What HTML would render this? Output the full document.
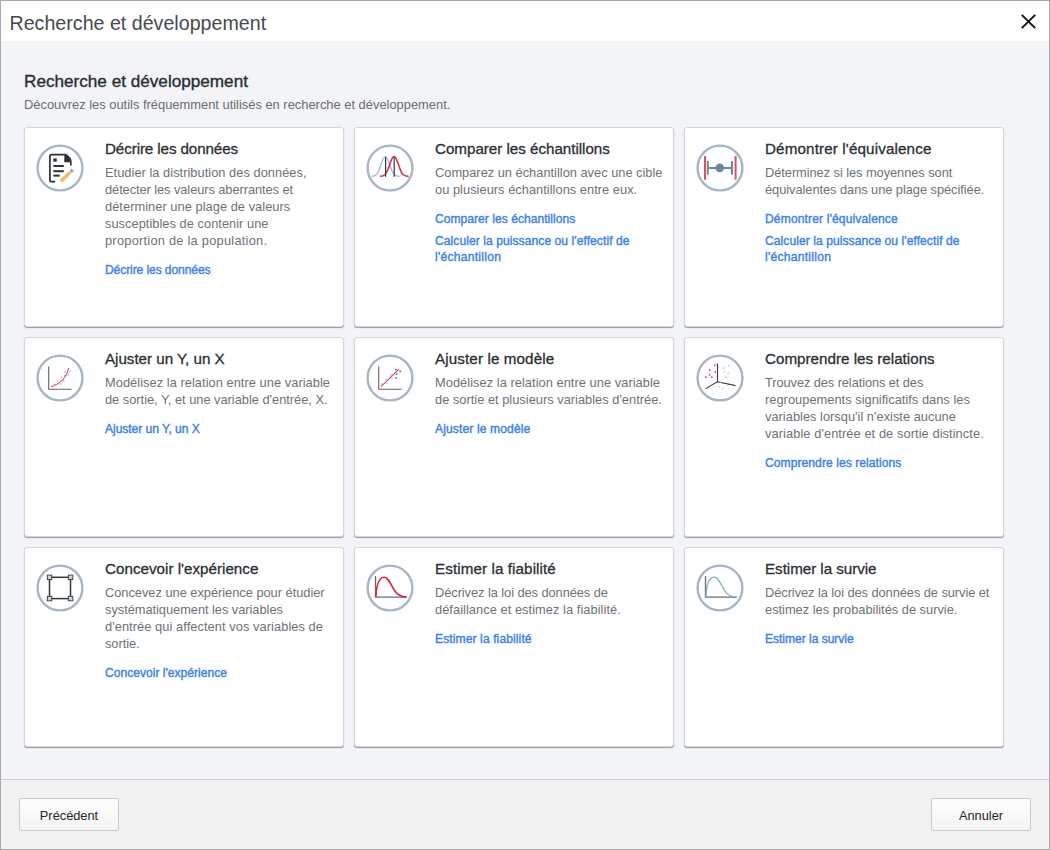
<!DOCTYPE html>
<html><head><meta charset="utf-8"><style>
*{margin:0;padding:0;box-sizing:border-box}
html,body{width:1050px;height:850px;overflow:hidden;background:#fff}
body{font-family:"Liberation Sans",sans-serif;position:relative}
#win{position:absolute;left:0;top:0;width:1050px;height:850px;border:1px solid #a9a9a9;background:#f3f4f7}
#tb{position:absolute;left:1px;top:1px;width:1048px;height:40px;background:#fff}
#ttl{position:absolute;left:9.5px;top:11px;font-size:19.65px;line-height:24px;color:#464b4f;white-space:nowrap}
#close{position:absolute;left:1020px;top:13px}
#head{position:absolute;left:24px;top:71px;font-size:17.15px;font-weight:400;-webkit-text-stroke:0.35px #232a31;line-height:20px;color:#2b2f33;white-space:nowrap}
#sub{position:absolute;left:24px;top:97px;font-size:12.9px;line-height:16px;color:#686c70;white-space:nowrap}
.card{position:absolute;width:320px;height:200px;background:#fff;border:1px solid #d4d8dc;border-radius:3px;box-shadow:0 1px 1px rgba(20,30,40,.42)}
.ic{position:absolute;left:11px;top:16px}
.ct{position:absolute;left:80px;top:11px;font-size:15.2px;line-height:20px;color:#2b2f33;-webkit-text-stroke:0.3px #2b2f33;white-space:nowrap}
.cd{position:absolute;left:80px;top:36px;font-size:12.83px;line-height:17px;color:#6e7276;white-space:nowrap}
.lk{position:absolute;left:80px;font-size:12.1px;font-weight:400;-webkit-text-stroke:0.38px #3a80ee;line-height:16px;color:#3a80ee;white-space:nowrap}
#sep{position:absolute;left:1px;top:779px;width:1048px;height:1px;background:#cfcfcf}
#foot{position:absolute;left:1px;top:780px;width:1048px;height:69px;background:#f2f2f2}
.btn{position:absolute;top:798px;width:100px;height:33px;border:1px solid #c9c9c9;border-radius:2px;background:linear-gradient(#fdfdfd,#f4f4f4);font-size:12.8px;color:#262626;text-align:center;line-height:33px}
</style></head><body>
<div id="win"></div>
<div id="tb"></div>
<div id="ttl">Recherche et développement</div>
<svg id="close" width="17" height="17" viewBox="0 0 17 17"><path d="M1.8 1.8L15.2 15.2M15.2 1.8L1.8 15.2" stroke="#111" stroke-width="1.9"/></svg>
<div id="head">Recherche et développement</div>
<div id="sub">Découvrez les outils fréquemment utilisés en recherche et développement.</div>
<div class="card" style="left:24px;top:127px">
<svg class="ic" width="48" height="48" viewBox="0 0 48 48"><circle cx="24" cy="24" r="22.4" fill="#fff" stroke="#a7b5c6" stroke-width="2.4"/><path d="M19.2 37.6H15.6Q13.9 37.6 13.9 35.9V12.4Q13.9 10.7 15.6 10.7H28.6" fill="none" stroke="#2c3138" stroke-width="1.7"/>
<path d="M28.3 10.7H29.8Q34.8 13.5 34.8 18.2V21.6" fill="none" stroke="#2c3138" stroke-width="1.7"/>
<path d="M28.3 10.8Q34.2 12.5 34.6 18.3H28.3Z" fill="#2c3138"/>
<rect x="17.4" y="14.4" width="3.3" height="3.3" fill="#2c3138"/>
<rect x="17.4" y="21" width="10.4" height="2" fill="#2c3138"/>
<rect x="17.4" y="26.2" width="10.4" height="2" fill="#2c3138"/>
<rect x="17.4" y="30.6" width="6.3" height="2" fill="#2c3138"/>
<path d="M24.8 37.2L34 28.4" stroke="#f6b65e" stroke-width="3.4" stroke-linecap="butt"/>
<path d="M34.5 27.9L36.8 25.7" stroke="#8fb0d0" stroke-width="3.4"/></svg>
<div class="ct"><span style="letter-spacing:-0.110px">Décrire les données</span></div>
<div class="cd"><span style="letter-spacing:0.031px">Etudier la distribution des données,</span><br><span style="letter-spacing:-0.071px">détecter les valeurs aberrantes et</span><br><span style="letter-spacing:0.042px">déterminer une plage de valeurs</span><br><span style="letter-spacing:0.033px">susceptibles de contenir une</span><br><span style="letter-spacing:0.240px">proportion de la population.</span></div>
<div class="lk" style="top:133.5px"><span style="letter-spacing:-0.110px">Décrire les données</span></div>
</div><div class="card" style="left:354px;top:127px">
<svg class="ic" width="48" height="48" viewBox="0 0 48 48"><circle cx="24" cy="24" r="22.4" fill="#fff" stroke="#a7b5c6" stroke-width="2.4"/><path d="M5.5 32.4C10 32.4 12 30 14.5 22C16.5 15.5 17.8 12.4 19.3 12.4C20.8 12.4 22 15.5 24.2 22C26.8 30 28.5 32.4 33.8 32.4" fill="none" stroke="#9dbfe0" stroke-width="1.4"/>
<path d="M14 32.4C18.5 32.4 20.6 30 23.2 22C25.2 15.5 26.5 12.4 28.1 12.4C29.6 12.4 30.8 15.5 33 22C35.6 30 37.4 32.4 42.6 32.4" fill="none" stroke="#dc3048" stroke-width="1.6"/>
<path d="M19.6 13V32.8M28.2 13V32.8" stroke="#2e3135" stroke-width="1.15"/></svg>
<div class="ct"><span style="letter-spacing:-0.030px">Comparer les échantillons</span></div>
<div class="cd">Comparez un échantillon avec une cible<br><span style="letter-spacing:0.031px">ou plusieurs échantillons entre eux.</span></div>
<div class="lk" style="top:82.5px"><span style="letter-spacing:0.015px">Comparer les échantillons</span></div>
<div class="lk" style="top:104.5px"><span style="letter-spacing:0.058px">Calculer la puissance ou l'effectif de</span><br><span style="letter-spacing:0.255px">l'échantillon</span></div>
</div><div class="card" style="left:684px;top:127px">
<svg class="ic" width="48" height="48" viewBox="0 0 48 48"><circle cx="24" cy="24" r="22.4" fill="#fff" stroke="#a7b5c6" stroke-width="2.4"/><path d="M9 12V35.8M39.6 12V35.8" stroke="#e34d62" stroke-width="2"/>
<path d="M11.8 17V30.8M36 17V30.8M11.8 23.9H36" stroke="#6f879e" stroke-width="2"/>
<circle cx="23.8" cy="23.9" r="4.3" fill="#6f879e"/></svg>
<div class="ct"><span style="letter-spacing:0.139px">Démontrer l'équivalence</span></div>
<div class="cd"><span style="letter-spacing:-0.054px">Déterminez si les moyennes sont</span><br><span style="letter-spacing:-0.049px">équivalentes dans une plage spécifiée.</span></div>
<div class="lk" style="top:82.5px"><span style="letter-spacing:0.123px">Démontrer l'équivalence</span></div>
<div class="lk" style="top:104.5px"><span style="letter-spacing:0.058px">Calculer la puissance ou l'effectif de</span><br><span style="letter-spacing:0.255px">l'échantillon</span></div>
</div><div class="card" style="left:24px;top:337px">
<svg class="ic" width="48" height="48" viewBox="0 0 48 48"><circle cx="24" cy="24" r="22.4" fill="#fff" stroke="#a7b5c6" stroke-width="2.4"/><path d="M12.7 12.6V35.3H35.5" fill="none" stroke="#5f6266" stroke-width="1.1"/>
<path d="M15 32.7C22 30.5 30 26 32.6 14" fill="none" stroke="#e04058" stroke-width="1.05"/>
<g fill="#8fb0d2"><rect x="17.5" y="29.4" width="1.3" height="1.3"/><rect x="20.9" y="26.4" width="1.3" height="1.3"/><rect x="24" y="29.4" width="1.3" height="1.3"/><rect x="24.7" y="22.5" width="1.3" height="1.3"/><rect x="27" y="26.4" width="1.3" height="1.3"/><rect x="27.8" y="21" width="1.3" height="1.3"/><rect x="28.2" y="17.2" width="1.3" height="1.3"/><rect x="31.6" y="20.2" width="1.3" height="1.3"/><rect x="33.5" y="16.8" width="1.3" height="1.3"/></g></svg>
<div class="ct"><span style="letter-spacing:-0.032px">Ajuster un Y, un X</span></div>
<div class="cd"><span style="letter-spacing:0.046px">Modélisez la relation entre une variable</span><br><span style="letter-spacing:-0.013px">de sortie, Y, et une variable d'entrée, X.</span></div>
<div class="lk" style="top:82.5px"><span style="letter-spacing:-0.053px">Ajuster un Y, un X</span></div>
</div><div class="card" style="left:354px;top:337px">
<svg class="ic" width="48" height="48" viewBox="0 0 48 48"><circle cx="24" cy="24" r="22.4" fill="#fff" stroke="#a7b5c6" stroke-width="2.4"/><path d="M12.7 12.6V35.3H35.5" fill="none" stroke="#5f6266" stroke-width="1.1"/>
<path d="M15 32.7L33 15.1" fill="none" stroke="#e23a52" stroke-width="1.1"/>
<g fill="#8fb0d2"><rect x="15.2" y="29.4" width="1.3" height="1.3"/><rect x="19.4" y="24.8" width="1.3" height="1.3"/><rect x="20.5" y="28.7" width="1.3" height="1.3"/><rect x="24.4" y="20.2" width="1.3" height="1.3"/><rect x="25.5" y="24.1" width="1.3" height="1.3"/></g>
<g fill="#2a2a2a"><rect x="29.3" y="14.9" width="1.3" height="1.3"/><rect x="33.5" y="16.8" width="1.3" height="1.3"/><rect x="30.1" y="19.5" width="1.3" height="1.3"/><rect x="29.3" y="23.3" width="1.3" height="1.3"/></g></svg>
<div class="ct"><span style="letter-spacing:0.113px">Ajuster le modèle</span></div>
<div class="cd"><span style="letter-spacing:0.046px">Modélisez la relation entre une variable</span><br><span style="letter-spacing:0.013px">de sortie et plusieurs variables d'entrée.</span></div>
<div class="lk" style="top:82.5px"><span style="letter-spacing:0.113px">Ajuster le modèle</span></div>
</div><div class="card" style="left:684px;top:337px">
<svg class="ic" width="48" height="48" viewBox="0 0 48 48"><circle cx="24" cy="24" r="22.4" fill="#fff" stroke="#a7b5c6" stroke-width="2.4"/><path d="M21.5 9.4V27.7L9.7 34.6M21.5 27.7L39.5 31.6" fill="none" stroke="#3a3d40" stroke-width="1.1"/>
<g fill="#dc2a46"><rect x="18.1" y="10.6" width="1.5" height="1.5"/><rect x="13.2" y="15.2" width="1.5" height="1.5"/><rect x="18.5" y="17.1" width="1.5" height="1.5"/><rect x="12.8" y="20.1" width="1.5" height="1.5"/><rect x="9" y="22.4" width="1.5" height="1.5"/><rect x="15.1" y="22.4" width="1.5" height="1.5"/></g>
<g fill="#a8c2dc"><rect x="21.8" y="12.3" width="1.2" height="1.2"/><rect x="27" y="13.4" width="1.4" height="1.4"/><rect x="32.3" y="11" width="1.4" height="1.4"/><rect x="27.7" y="17.1" width="1.4" height="1.4"/><rect x="31.5" y="18.6" width="1.4" height="1.4"/><rect x="29.2" y="22.4" width="1.4" height="1.4"/></g>
<g fill="#c9cfc4"><rect x="17" y="32" width="1.4" height="1.4"/><rect x="22.3" y="32" width="1.4" height="1.4"/><rect x="25.4" y="34.3" width="1.4" height="1.4"/><rect x="23.9" y="28.3" width="1.2" height="1.2"/><rect x="30.8" y="30.5" width="1.2" height="1.2"/></g></svg>
<div class="ct">Comprendre les relations</div>
<div class="cd"><span style="letter-spacing:-0.087px">Trouvez des relations et des</span><br><span style="letter-spacing:0.026px">regroupements significatifs dans les</span><br><span style="letter-spacing:0.016px">variables lorsqu'il n'existe aucune</span><br><span style="letter-spacing:0.077px">variable d'entrée et de sortie distincte.</span></div>
<div class="lk" style="top:116.5px"><span style="letter-spacing:0.055px">Comprendre les relations</span></div>
</div><div class="card" style="left:24px;top:547px">
<svg class="ic" width="48" height="48" viewBox="0 0 48 48"><circle cx="24" cy="24" r="22.4" fill="#fff" stroke="#a7b5c6" stroke-width="2.4"/><rect x="13.5" y="13.3" width="21" height="21.3" fill="none" stroke="#33363a" stroke-width="1.5"/>
<g fill="#cdd7c6" stroke="#33363a" stroke-width="0.9"><rect x="11.3" y="11.1" width="4.5" height="4.5"/><rect x="32.3" y="11.1" width="4.5" height="4.5"/><rect x="11.3" y="32.3" width="4.5" height="4.5"/><rect x="32.3" y="32.3" width="4.5" height="4.5"/></g></svg>
<div class="ct"><span style="letter-spacing:0.009px">Concevoir l'expérience</span></div>
<div class="cd"><span style="letter-spacing:-0.021px">Concevez une expérience pour étudier</span><br><span style="letter-spacing:-0.037px">systématiquement les variables</span><br><span style="letter-spacing:0.066px">d'entrée qui affectent vos variables de</span><br><span style="letter-spacing:-0.060px">sortie.</span></div>
<div class="lk" style="top:116.5px">Concevoir l'expérience</div>
</div><div class="card" style="left:354px;top:547px">
<svg class="ic" width="48" height="48" viewBox="0 0 48 48"><circle cx="24" cy="24" r="22.4" fill="#fff" stroke="#a7b5c6" stroke-width="2.4"/><path d="M9.5 12V33.2H40.8" fill="none" stroke="#6a6d70" stroke-width="1.3"/>
<path d="M9.9 33C10.6 18 14 13.2 18.3 13.2C22.5 13.2 24.5 20 28.5 26.5C32 31.8 35.5 33 40.6 33" fill="none" stroke="#d8283e" stroke-width="1.6"/></svg>
<div class="ct"><span style="letter-spacing:0.095px">Estimer la fiabilité</span></div>
<div class="cd"><span style="letter-spacing:-0.062px">Décrivez la loi des données de</span><br><span style="letter-spacing:0.051px">défaillance et estimez la fiabilité.</span></div>
<div class="lk" style="top:82.5px"><span style="letter-spacing:0.095px">Estimer la fiabilité</span></div>
</div><div class="card" style="left:684px;top:547px">
<svg class="ic" width="48" height="48" viewBox="0 0 48 48"><circle cx="24" cy="24" r="22.4" fill="#fff" stroke="#a7b5c6" stroke-width="2.4"/><path d="M9.5 12V33.2H40.8" fill="none" stroke="#6a6d70" stroke-width="1.3"/>
<path d="M9.9 33C10.6 18 14 13.2 18.3 13.2C22.5 13.2 24.5 20 28.5 26.5C32 31.8 35.5 33 40.6 33" fill="none" stroke="#86a9cf" stroke-width="1.3"/></svg>
<div class="ct"><span style="letter-spacing:-0.045px">Estimer la survie</span></div>
<div class="cd"><span style="letter-spacing:-0.060px">Décrivez la loi des données de survie et</span><br><span style="letter-spacing:-0.005px">estimez les probabilités de survie.</span></div>
<div class="lk" style="top:82.5px"><span style="letter-spacing:-0.045px">Estimer la survie</span></div>
</div>
<div id="sep"></div>
<div id="foot"></div>
<div class="btn" style="left:19px">Précédent</div>
<div class="btn" style="left:931px">Annuler</div>
</body></html>
